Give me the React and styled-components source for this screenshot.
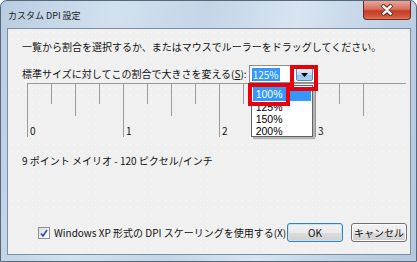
import React from 'react';
import styled, { createGlobalStyle } from 'styled-components';

const GlobalStyle = createGlobalStyle`
  html, body {
    margin: 0;
    padding: 0;
    background: #ffffff;
  }
  * {
    box-sizing: border-box;
  }
`

const FONT = `"Noto Sans CJK JP", "Noto Sans", sans-serif`

const majors = [0, 1, 2, 3]

export default function App() {
  const ticks = []
  for (let i = 0; i <= 14; i++) {
    const x = 1 + i * 24
    const h = i % 4 === 0 ? 54 : i % 2 === 0 ? 33 : 21
    ticks.push(<line key={i} x1={x + 0.5} y1={0} x2={x + 0.5} y2={h} stroke="#9a9a9a" strokeWidth="1" />)
  }

  return (
    <React.Fragment>
      <GlobalStyle />
      <Window>
        <TitleBar>
          <Title>カスタム DPI 設定</Title>
          <CloseButton>
            <svg width="14" height="12" viewBox="0 0 14 12">
              <path d="M2 1 L7 5 L12 1 M2 11 L7 7 L12 11" stroke="#5a1a10" strokeWidth="4" fill="none" />
              <path d="M2.5 1.5 L7 5.5 L11.5 1.5 M2.5 10.5 L7 6.5 L11.5 10.5" stroke="#ffffff" strokeWidth="2.4" fill="none" />
            </svg>
          </CloseButton>
        </TitleBar>
        <Client>
          <Instruction>一覧から割合を選択するか、またはマウスでルーラーをドラッグしてください。</Instruction>
          <ScaleRow>
            <Label>標準サイズに対してこの割合で大きさを変える(<u>S</u>):</Label>
            <Combo>
              <ComboValue>125%</ComboValue>
              <ArrowButton>
                <svg width="7" height="4" viewBox="0 0 7 4">
                  <path d="M0 0 H7 L3.5 4 Z" fill="#000" />
                </svg>
              </ArrowButton>
              <DropList>
                <Option selected>100%</Option>
                <Option>125%</Option>
                <Option>150%</Option>
                <Option>200%</Option>
              </DropList>
              <Highlight style={{ left: 40, top: -1, width: 28, height: 26 }} />
              <Highlight style={{ left: -2, top: 17, width: 42, height: 23 }} />
            </Combo>
          </ScaleRow>
          <Ruler>
            <svg width="380" height="57" viewBox="0 0 380 57">
              <line x1="1" y1="0.5" x2="380" y2="0.5" stroke="#9a9a9a" strokeWidth="1" />
              {ticks}
              {majors.map(m => (
                <RulerText key={m} x={1 + m * 96 + 3} y={52}>{m}</RulerText>
              ))}
            </svg>
          </Ruler>
          <Info>9 ポイント メイリオ - 120 ピクセル/インチ</Info>
          <Footer>
            <CheckBox>
              <svg width="8" height="8" viewBox="0 0 8 8">
                <path d="M1 4.5 L3 7 L7 1" stroke="#2a4fa8" strokeWidth="1.6" fill="none" />
              </svg>
            </CheckBox>
            <CheckLabel>Windows XP 形式の DPI スケーリングを使用する(X)</CheckLabel>
            <Button primary>OK</Button>
            <Button>キャンセル</Button>
          </Footer>
        </Client>
      </Window>
    </React.Fragment>
  )
}

const Window = styled.div`
  width: 417px;
  height: 262px;
  display: flex;
  flex-direction: column;
  padding: 0 5px 6px 6px;
  border: 1px solid #56687c;
  border-radius: 7px 7px 0 0;
  background: linear-gradient(100deg, #b9cde2 0%, #d3e1ee 25%, #c3d5e7 45%, #d8e4f0 65%, #bed1e4 85%, #b5c9de 100%);
  font-family: ${FONT};
`

const TitleBar = styled.div`
  height: 27px;
  display: flex;
  justify-content: space-between;
  align-items: flex-start;
`

const Title = styled.div`
  margin-top: 9px;
  padding-left: 1px;
  font-size: 9px;
  line-height: 12px;
  color: #1a1a1a;
`

const CloseButton = styled.div`
  width: 48px;
  height: 19px;
  display: flex;
  align-items: center;
  justify-content: center;
  border: 1px solid #6b2a22;
  border-top: none;
  border-radius: 0 0 4px 4px;
  background: linear-gradient(180deg, #e9a89a 0%, #d7705e 45%, #c33d26 55%, #d2553a 85%, #e07a55 100%);
`

const Client = styled.div`
  flex: 1;
  display: flex;
  flex-direction: column;
  padding: 11px 0 0 14px;
  border: 1px solid #7b8ea4;
  background-color: #f0f0f0;
  background-image: radial-gradient(circle, #fbfbfb 0.7px, transparent 0.9px);
  background-size: 7px 7px;
  font-size: 10px;
  color: #111;
`

const Instruction = styled.div`
  line-height: 14px;
  white-space: nowrap;
`

const ScaleRow = styled.div`
  margin-top: 11px;
  height: 18px;
  display: flex;
  align-items: center;
  position: relative;
  z-index: 2;
`

const Label = styled.div`
  line-height: 14px;
  white-space: nowrap;
  margin-right: 2px;
  u {
    text-decoration: underline;
  }
`

const Combo = styled.div`
  position: relative;
  width: 66px;
  height: 18px;
  display: flex;
  align-items: stretch;
  padding: 2px 1px 1px 2px;
  border: 1px solid #8c8c8c;
  background: #ffffff;
`

const ComboValue = styled.div`
  width: 28px;
  padding-left: 1px;
  background: #3399ff;
  color: #ffffff;
  line-height: 13px;
`

const ArrowButton = styled.div`
  margin-left: auto;
  width: 17px;
  display: flex;
  align-items: center;
  justify-content: center;
  border: 1px solid #5b8ab8;
  border-radius: 2px;
  background: linear-gradient(180deg, #e3f0fb 0%, #bcd9f2 50%, #9dc5e8 51%, #a9cfee 100%);
`

const DropList = styled.div`
  position: absolute;
  left: 1px;
  top: 19px;
  width: 62px;
  height: 52px;
  padding: 1px;
  border: 1px solid #646464;
  background: #ffffff;
  box-shadow: 2px 2px 1px rgba(0, 0, 0, 0.25);
`

const Option = styled.div`
  height: ${props => (props.selected ? 14 : 12)}px;
  line-height: ${props => (props.selected ? 14 : 12)}px;
  padding-left: 3px;
  font-family: "Liberation Sans", Arial, sans-serif;
  font-size: 10.5px;
  background: ${props => (props.selected ? '#3399ff' : 'transparent')};
  color: ${props => (props.selected ? '#ffffff' : '#000000')};
`

const Highlight = styled.div`
  position: absolute;
  border: 4px solid #e8000b;
`

const Ruler = styled.div`
  margin-left: 4px;
  height: 57px;
  display: flex;
  svg {
    display: block;
  }
`

const RulerText = styled.text`
  font-family: ${FONT};
  font-size: 10px;
  fill: #111111;
`

const Info = styled.div`
  margin-top: 13px;
  line-height: 16px;
  white-space: nowrap;
`

const Footer = styled.div`
  margin-top: auto;
  padding: 0 3px 12px 16px;
  display: flex;
  align-items: center;
`

const CheckBox = styled.div`
  width: 12px;
  height: 12px;
  display: flex;
  align-items: center;
  justify-content: center;
  border: 1px solid #8e8f8f;
  background: linear-gradient(135deg, #dcdcdc 0%, #ffffff 100%);
`

const CheckLabel = styled.div`
  margin-left: 4px;
  line-height: 14px;
  white-space: nowrap;
`

const Button = styled.div`
  width: 56px;
  height: 19px;
  margin-left: ${props => (props.primary ? 'auto' : '8px')};
  display: flex;
  align-items: center;
  justify-content: center;
  border: 1px solid ${props => (props.primary ? '#3c7fb1' : '#707070')};
  border-radius: 3px;
  background: linear-gradient(180deg, #f2f2f2 0%, #ebebeb 50%, #dddddd 51%, #cfcfcf 100%);
  box-shadow: inset 0 0 0 1px ${props => (props.primary ? '#bfe6f9' : '#fcfcfc')};
  font-size: 10px;
`
